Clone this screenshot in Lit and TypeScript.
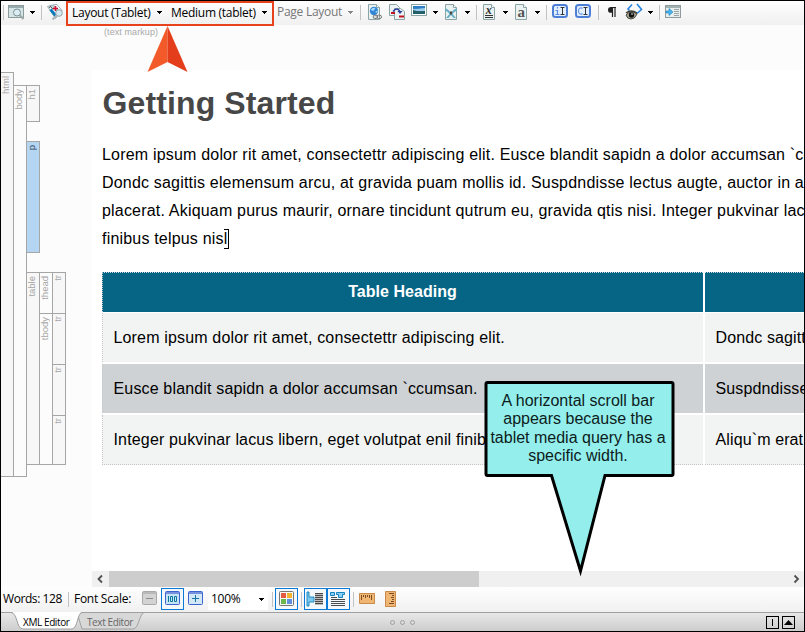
import { LitElement, html, css, svg, nothing } from "lit";
import { customElement, property } from "lit/decorators.js";

const page = svg`<path d="M.5 .5h8l3 3v12h-11z" fill="#e9f1f1" stroke="#8ba5a6"/><path d="M8.500 .5v3h3" fill="#fff" stroke="#8ba5a6"/>`;

const icons: Record<string, unknown> = {
  preview: svg`<rect x=".5" y="1.500" width="15" height="12" fill="#d5e4e4" stroke="#8c9a9a"/><path d="M1 3h14" stroke="#9aabab" stroke-width="2"/><circle cx="9" cy="8.500" r="3.500" fill="#d9edf3" stroke="#7d9094"/><path d="M11.500 11l4 4" stroke="#9aa7a8" stroke-width="2"/>`,
  tags: svg`<path d="M.5 2.500L5 1l7 9-3.500 4.500z" fill="#eef8fc" stroke="#7c96a0" stroke-width=".8"/><path d="M2.500 6.500l5 6 2-2-5-6z" fill="#0878bd"/><path d="M2 3.500l2-1 2 3" fill="none" stroke="#333" stroke-width=".9"/><path d="M6 .8l4-.3 5 6-2 2z" fill="#fff" stroke="#8aa0a8" stroke-width=".8"/><path d="M6 4.500h5M8.500 2v5" stroke="#d0122e" stroke-width="1.600"/><circle cx="12" cy="9" r="3.300" fill="#d7eaf1" stroke="#91a4aa"/><path d="M9.500 11.500l-4 4" stroke="#a9b3b6" stroke-width="1.800"/>`,
  link: svg`${page}<circle cx="6" cy="7" r="4.200" fill="#2f86d6"/><path d="M2.500 6q2-3 5-2l-2 3zM7 8l3-2-1 3z" fill="#a5d7f8"/><rect x="5.200" y="11.200" width="4.500" height="3.300" rx="1.600" fill="#ddd" stroke="#777"/><rect x="9" y="11.200" width="4.500" height="3.300" rx="1.600" fill="none" stroke="#777"/>`,
  xref: svg`<path d="M.5 .5h7l3 3v8h-10z" fill="#edf3f3" stroke="#8ba5a6"/><path d="M5.500 4.500h6l4 3v8h-10z" fill="#edf3f3" stroke="#8ba5a6"/><path d="M2 9h4M10 12.500h5" stroke="#c01522" stroke-width="2"/><path d="M4 7.500q4-5 7 0" fill="none" stroke="#2a3f9d" stroke-width="1.500"/><path d="M8.500 7h5l-2.500 3z" fill="#2a3f9d"/>`,
  image: svg`<rect x=".5" y=".5" width="15" height="11" fill="#fff" stroke="#8ba5a6"/><rect x="2" y="2" width="12" height="8" fill="#2d7ec5"/><path d="M2 5q5 0 12-1v3H2z" fill="#9fcdec"/><path d="M2 6q5 2 12 1v3H2z" fill="#235f66"/>`,
  variable: svg`${page}<path d="M0 4.500q3 0 6 4.500q3-4.500 6-4.500l0 2q-3 1-4.500 3.500l3.500 4h-2.500l-2.500-3l-2.500 3h-2.500l3.500-4q-2-3-4.500-3.500z" fill="#67aec2"/><path d="M5 7.500h2v3h-2z" fill="#4e4743"/>`,
  format: svg`${page}<text x="2.700" y="9.500" font-family="Liberation Serif,serif" font-style="italic" font-weight="700" font-size="12" fill="#333">x</text><path d="M2 11.500h8M2 13.500h8" stroke="#333"/>`,
  style: svg`${page}<text x="2.500" y="13" font-family="Liberation Serif,serif" font-weight="700" font-size="15" fill="#555">a</text>`,
  insertI: svg`<rect x="1" y="1" width="14" height="12" rx="2.500" fill="#e3efff" stroke="#4d7fd6" stroke-width="2"/><path d="M3.500 6.500h2v4M3.500 10.500h4M5.500 3v1.500" fill="none" stroke="#5b8ade" stroke-width="1.200"/><path d="M8.500 3.500h4M10.500 3.500v7M8.500 10.500h4" stroke="#333"/>`,
  insertC: svg`<rect x="1" y="1" width="14" height="12" rx="2.500" fill="#e3efff" stroke="#4d7fd6" stroke-width="2"/><path d="M7.500 4.500q-1-1-2.500-.5q-1.500.5-1.500 3t1.500 3q1.500.5 2.500-.5" fill="none" stroke="#6f98e0" stroke-width="1.200"/><path d="M8.500 3.500h4M10.500 3.500v7M8.500 10.500h4" stroke="#333"/>`,
  pilcrow: svg`<path d="M4.500 3v10M7 3v10M3.500 3.500H8" stroke="#222" stroke-width="1.200"/><path d="M4.500 3h-1.500a3 2.900 0 0 0 0 5.800h1.500z" fill="#222"/>`,
  eye: svg`<path d="M3.500 6.500L2 5l4-4.500M11 0l4.500 5.500-4.500 4" fill="none" stroke="#2585de" stroke-width="1.600"/><path d="M0 11q5-6 11-1q-2 5-6 5q-4 0-5-4z" fill="#a8a797" stroke="#48483e"/><path d="M0 9q5-4 11 0" fill="none" stroke="#3d3d35" stroke-width="1.500"/><circle cx="5.500" cy="11" r="2.700" fill="#111"/><circle cx="6" cy="10" r=".8" fill="#fff"/>`,
  panel: svg`<rect x=".5" y="1.500" width="15" height="12" fill="#e8eded" stroke="#8f9b9c"/><path d="M1 3h14" stroke="#a2b1b2" stroke-width="2"/><path d="M9 5.500h5M9 7.500h5M9 9.500h5M9 11.500h5" stroke="#99a5a6"/><path d="M1 7h3v-2.500l4 3.500-4 3.500v-2.500h-3z" fill="#48b4ee" stroke="#1c82c0" stroke-width=".6"/>`,
  minus: svg`<rect x=".5" y=".5" width="14" height="13" rx="1" fill="#d3d3d3" stroke="#a9a9a9"/><path d="M1 2h13" stroke="#b9b9b9" stroke-width="2"/><path d="M4 7.500h7" stroke="#8b8b8b"/>`,
  hundred: svg`<rect x=".5" y=".5" width="14" height="13" rx="1" fill="#c6e2f5" stroke="#3c64cf"/><path d="M1 2h13" stroke="#7591dd" stroke-width="2"/><path d="M3.500 5v6M5.500 5.500h2v5h-2zM9.500 5.500h2v5h-2z" fill="none" stroke="#087a9d"/>`,
  plus: svg`<rect x=".5" y=".5" width="14" height="13" rx="1" fill="#d3e8f6" stroke="#3c64cf"/><path d="M1 2h13" stroke="#7591dd" stroke-width="2"/><path d="M4 7.500h7M7.500 4v7" stroke="#1673a6"/>`,
  blocks: svg`<rect x=".5" y=".5" width="14" height="14" rx="1" fill="#f6f6f6" stroke="#747474"/><path d="M2 2h5v5H2z" fill="#e4593f"/><path d="M8 2h5v5H8z" fill="#f0b52c"/><path d="M2 8h5v5H2z" fill="#6ab74c"/><path d="M8 8h5v5H8z" fill="#5f8edc"/>`,
  sideBars: svg`<path d="M0 1h2v5h5v5h-5v4h-2z" fill="#7cc8ee" stroke="#1583bd" stroke-width=".9"/><path d="M8 2h8v12H8z" fill="#bbb"/><path d="M8 2.500h8M8 4.500h8M8 6.500h8M8 8.500h8M8 10.500h8M8 12.500h8" stroke="#4b4b4b"/>`,
  topBars: svg`<path d="M.5 1.500h4v3h-4zM6.500 1.500h8v2h-2v3h-4v-3h-2z" fill="#8bd0f2" stroke="#1583bd"/><path d="M1 8.500h14M1 10.500h14M1 12.500h14M1 14.500h14M1 6.500h6" stroke="#4b4b4b"/>`,
  rulerH: svg`<path d="M.5 2.500h15v10H.5z" fill="#f0b673" stroke="#c98a49"/><path d="M2.500 4v5M4.500 4v2M6.500 4v3M8.500 4v2M10.500 4v3M12.500 4v5" stroke="#7d4b22"/>`,
  rulerV: svg`<path d="M.5 .5h10v15H.5z" fill="#f0b673" stroke="#c98a49"/><path d="M4 2.500h5M7 4.500h2M6 6.500h3M7 8.500h2M6 10.500h3M4 12.500h5" stroke="#7d4b22"/>`,
};

@customElement("ui-icon")
class UiIcon extends LitElement {
  @property() name = "";
  static styles = css`
    :host { display: block; width: 17px; height: 16px; }
    svg { display: block; overflow: visible; }
  `;
  render() {
    return html`<svg width="17" height="16" viewBox="0 0 17 16">${icons[this.name] ?? nothing}</svg>`;
  }
}

@customElement("drop-caret")
class DropCaret extends LitElement {
  static styles = css`
    :host { display: block; width: 5px; height: 3px; }
    svg { display: block; }
  `;
  render() {
    return html`<svg width="5" height="3" shape-rendering="crispEdges"><path d="M0 0h5v1h-1v1h-1v1h-1v-1h-1v-1h-1z" fill="currentColor" /></svg>`;
  }
}

interface Segment { tag: string; size: string; }
const columns: { cls: string; segments: Segment[] }[] = [
  { cls: "c-html", segments: [{ tag: "html", size: "s-html" }] },
  { cls: "c-body", segments: [{ tag: "body", size: "s-body" }] },
  { cls: "c-block", segments: [{ tag: "h1", size: "s-h1" }, { tag: "p", size: "s-p" }, { tag: "table", size: "s-table" }] },
  { cls: "c-group", segments: [{ tag: "thead", size: "s-thead" }, { tag: "tbody", size: "s-tbody" }] },
  { cls: "c-row", segments: [{ tag: "tr", size: "s-thead" }, { tag: "tr", size: "s-tr" }, { tag: "tr", size: "s-tr" }, { tag: "tr", size: "s-last" }] },
];

@customElement("tag-bars")
class TagBars extends LitElement {
  static styles = css`
    :host { display: flex; align-items: flex-start; width: 91px; font: 9.500px/12px "Liberation Sans", Arial, sans-serif; color: #a6a6a6; }
    .col { width: 13px; flex: none; }
    .seg { box-sizing: border-box; border: 1px solid #a6a6a6; border-left: 0; background: #f7f7f7; overflow: hidden; }
    .seg + .seg { margin-top: -1px; }
    .label { display: block; width: 10px; writing-mode: vertical-rl; transform: rotate(180deg); margin-top: 3px; line-height: 10px; text-align: right; }
    .c-html { padding-top: 47px; }
    .c-body { padding-top: 60px; }
    .c-body .seg, .c-group .seg { background: #fcfcfc; }
    .c-block { padding-top: 60px; }
    .c-group, .c-row { padding-top: 247px; }
    .c-row .label { margin-top: 2px; }
    .s-html { height: 405px; }
    .s-body { height: 392px; }
    .s-h1 { height: 37px; }
    .seg.s-p { height: 112px; margin-top: 19px; background: #b4d6f3; color: #2f4358; }
    .seg.s-table { height: 193px; margin-top: 19px; }
    .s-thead { height: 42px; }
    .s-tbody { height: 152px; }
    .s-tr { height: 52px; }
    .s-last { height: 50px; }
  `;
  render() {
    return columns.map(
      (c) => html`<div class="col ${c.cls}">
        ${c.segments.map((s) => html`<div class="seg ${s.size}"><span class="label">${s.tag}</span></div>`)}
      </div>`
    );
  }
}

const toolbarAfterBox = [
  "Page Layout", "v-", "|", "link", "xref", "image", "v", "variable", "v", "|", "format", "v", "style", "v", "|",
  "insertI", "insertC", "|", "pilcrow", "eye", "v", "|", "panel",
];

@customElement("app-root")
class AppRoot extends LitElement {
  static styles = css`
    :host { display: block; position: relative; box-sizing: border-box; width: 805px; height: 632px; border: 1px solid #000; overflow: hidden; background: #fcfcfc; font: 12px/16px "Open Sans", "Noto Sans", sans-serif; color: #000; }
    .frame { display: flex; flex-direction: column; height: 630px; }
    .toolbar { flex: none; height: 24px; box-sizing: border-box; display: grid; align-items: center; padding: 0 0 2px 2px; background: linear-gradient(#fefefe, #f0f0f0);
      grid-template-rows: 22px;
      grid-template-columns: 5px 22px 11px 6px 19px 211px 71px 12px 8px 21px 22px 22px 12px 20px 11px 7px 20px 12px 20px 11px 6px 23px 23px 10px 18px 22px 11px 6px 17px; }
    .sep { width: 1px; height: 15px; background: #c3c3c3; }
    .selected { box-sizing: border-box; width: 208px; height: 25px; align-self: start; border: 2px solid #e8411e; display: flex; align-items: center; padding: 0 0 2px 4px; white-space: nowrap; }
    .layout { width: 85px; letter-spacing: -0.27px; }
    .medium { width: 91px; margin-left: 9px; letter-spacing: -0.27px; }
    .pl { color: #777; white-space: nowrap; letter-spacing: -0.27px; }
    .off { color: #888; }
    .work { flex: none; height: 562px; display: flex; }
    .main { width: 712px; display: flex; flex-direction: column; }
    .markup { height: 45px; box-sizing: border-box; padding: 0 0 0 12px; font: 9px/14px "Liberation Sans", Arial, sans-serif; color: #a9a9a9; letter-spacing: .08px; }
    .doc { height: 501px; box-sizing: border-box; padding: 13px 0 0 10px; background: #fff; overflow: hidden; font: 16px/28px "Liberation Sans", Arial, sans-serif; white-space: nowrap; }
    h1 { margin: 0 0 18px .5px; font-size: 32px; line-height: 40px; color: #474747; letter-spacing: .12px; }
    .line { height: 28px; letter-spacing: .19px; }
    .caret { display: inline-block; vertical-align: -5px; box-sizing: border-box; width: 5px; height: 20px; margin-left: -3px; border: 1px solid #000; border-left: 0; }
    .grid { margin-top: 19px; display: grid; grid-template-columns: 601px 601px; grid-template-rows: 39px 49px 49px 50px; gap: 2px; }
    .cell { display: flex; align-items: center; box-sizing: border-box; padding-left: 10.500px; background: #f2f4f3; border-left: 1px dotted #c4c6c8; letter-spacing: .16px; }
    .cell.alt { background: #ced2d5; }
    .cell.head { height: 40px; background: #066585; color: #fff; font-weight: 700; justify-content: center; padding: 0 1px 2px 0; border-top: 1px dotted #c4d5dc; letter-spacing: .03px; }
    .cell.last { border-bottom: 1px dotted #c4c6c8; }
    .cell:nth-child(even) { border-left: 0; letter-spacing: .12px; }
    .scroll { height: 16px; display: flex; align-items: center; background: #f0f0f0; }
    .scroll svg { width: 17px; height: 16px; flex: none; }
    .thumb { width: 370px; height: 16px; background: #cdcdcd; }
    .rest { flex: 1; }
    .status { flex: none; height: 25px; box-sizing: border-box; display: grid; align-items: center; padding: 0 0 1px 2px; background: linear-gradient(#fefefe, #f1f1f1); white-space: nowrap; letter-spacing: -.27px;
      grid-template-columns: 65px 6px 68px 19px 27px 20px 64px 3px 26px 3px 49px 6px 26px 17px; }
    .status > ui-icon { justify-self: start; }
    .words { letter-spacing: -.42px; }
    .boxed { box-sizing: border-box; width: 23px; height: 22px; border: 1px solid #0b79d6; display: flex; align-items: center; padding-left: 3px; background: #f3f8fd; }
    .pair { display: flex; }
    .pair .boxed { padding-left: 2px; }
    .combo { box-sizing: border-box; width: 60px; height: 22px; background: #fff; display: flex; align-items: center; justify-content: space-between; padding: 0 4px 0 3px; }
    .tabs { flex: none; height: 19px; position: relative; display: flex; align-items: center; box-sizing: border-box; border-top: 1px solid #a0a0a0; background: linear-gradient(#e8e8e8, #cdcdcd); font-size: 10px; line-height: 17px; }
    .tabshape { position: absolute; left: 0; top: -1px; }
    .tab { position: relative; white-space: nowrap; }
    .tab.a { margin-left: 22px; width: 64px; letter-spacing: -.4px; }
    .tab.b { width: 303px; color: #666; letter-spacing: -.4px; }
    .dots { display: flex; gap: 5px; width: 376px; }
    .dot { width: 5px; height: 5px; box-sizing: border-box; border: 1px solid #a0a0a0; border-radius: 50%; }
    .btn { box-sizing: border-box; width: 13px; height: 13px; border: 1px solid #000; margin-right: 3px; }
    .btn svg { display: block; }
    .arrow { position: absolute; left: 145px; top: 24px; }
    .callout { position: absolute; left: 483px; top: 380px; width: 190px; height: 194px; }
    .callout svg { position: absolute; left: 0; top: 0; }
    .note { position: relative; left: -1px; padding-top: 11px; text-align: center; font: 16px/18.400px "Liberation Sans", Arial, sans-serif; color: #0c1c1c; white-space: nowrap; letter-spacing: 0; }
  `;

  item(name: string) {
    if (name === "|") return html`<i class="sep"></i>`;
    if (name === "v") return html`<drop-caret></drop-caret>`;
    if (name === "v-") return html`<drop-caret class="off"></drop-caret>`;
    if (name === "Page Layout") return html`<span class="pl">${name}</span>`;
    return html`<ui-icon name=${name}></ui-icon>`;
  }

  render() {
    return html`
      <div class="frame">
        <div class="toolbar">
          ${["|", "preview", "v", "|", "tags"].map((n) => this.item(n))}
          <div class="selected">
            <span class="layout">Layout (Tablet)</span><drop-caret></drop-caret>
            <span class="medium">Medium (tablet)</span><drop-caret></drop-caret>
          </div>
          ${toolbarAfterBox.map((n) => this.item(n))}
        </div>
        <div class="work">
          <tag-bars></tag-bars>
          <div class="main">
            <div class="markup">(text markup)</div>
            <div class="doc">
              <h1>Getting Started</h1>
              <div class="line">Lorem ipsum dolor rit amet, consectettr adipiscing elit. Eusce blandit sapidn a dolor accumsan \`ccumsan.</div>
              <div class="line">Dondc sagittis elemensum arcu, at gravida puam mollis id. Suspdndisse lectus augte, auctor in a</div>
              <div class="line">placerat. Akiquam purus maurir, ornare tincidunt qutrum eu, gravida qtis nisi. Integer pukvinar lacus</div>
              <div class="line">finibus telpus nisl<i class="caret"></i></div>
              <div class="grid">
                <div class="cell head">Table Heading</div><div class="cell head"></div>
                <div class="cell">Lorem ipsum dolor rit amet, consectettr adipiscing elit.</div><div class="cell">Dondc sagittis</div>
                <div class="cell alt">Eusce blandit sapidn a dolor accumsan \`ccumsan.</div><div class="cell alt">Suspdndisse</div>
                <div class="cell last">Integer pukvinar lacus libern, eget volutpat enil finibus.</div><div class="cell last">Aliqu\`m erat</div>
              </div>
            </div>
            <div class="scroll">
              <svg><path d="M10 4.500L6.500 8l3.500 3.500" fill="none" stroke="#505050" stroke-width="1.800" /></svg>
              <div class="thumb"></div><div class="rest"></div>
              <svg><path d="M7.500 4.500L11 8l-3.500 3.500" fill="none" stroke="#505050" stroke-width="1.800" /></svg>
            </div>
          </div>
        </div>
        <div class="status">
          <span class="words">Words: 128</span><i class="sep"></i><span>Font Scale:</span>
          <ui-icon name="minus"></ui-icon>
          <div class="boxed"><ui-icon name="hundred"></ui-icon></div>
          <ui-icon name="plus"></ui-icon>
          <div class="combo"><span>100%</span><drop-caret></drop-caret></div>
          <i class="sep"></i>
          <div class="boxed"><ui-icon name="blocks"></ui-icon></div>
          <i class="sep"></i>
          <div class="pair"><div class="boxed"><ui-icon name="sideBars"></ui-icon></div><div class="boxed"><ui-icon name="topBars"></ui-icon></div></div>
          <i class="sep"></i>
          <ui-icon name="rulerH"></ui-icon><ui-icon name="rulerV"></ui-icon>
        </div>
        <div class="tabs">
          <svg class="tabshape" width="150" height="18">
            <path d="M76 .5h67c-5 2-5 16-11 16.500H81z" fill="#d8d8d8" stroke="#a0a0a0" />
            <path d="M10 0c7 1 5 16 12 17h49c6-1 5-16 10-17z" fill="#fff" />
            <path d="M10 .5c7 1 5 16 12 16.500h49c6-1 5-15.500 10-16.500" fill="none" stroke="#a0a0a0" />
          </svg>
          <span class="tab a">XML Editor</span><span class="tab b">Text Editor</span>
          <div class="dots"><i class="dot"></i><i class="dot"></i><i class="dot"></i></div>
          <div class="btn"><svg width="11" height="11"><path d="M5.500 2v7" stroke="#000" /></svg></div>
          <div class="btn"><svg width="11" height="11"><path d="M1 8L5.500 3 10 8z" fill="#000" /></svg></div>
        </div>
      </div>
      <svg class="arrow" width="44" height="48"><path d="M21.500 1L1.500 47l20-10z" fill="#f25a29" /><path d="M21.500 1l20 46-20-10z" fill="#e43d1b" /></svg>
      <div class="callout">
        <svg width="192" height="196"><path d="M3.500 1.500h184q1.500 0 1.500 1.500v90q0 1.500-1.500 1.500H121L96.500 190 67.500 94.500H3.500q-1.500 0-1.500-1.500V3q0-1.500 1.500-1.500z" fill="#94efec" stroke="#000" stroke-width="3" /></svg>
        <div class="note">A horizontal scroll bar<br />appears because the<br />tablet media query has a<br />specific width.</div>
      </div>
    `;
  }
}
